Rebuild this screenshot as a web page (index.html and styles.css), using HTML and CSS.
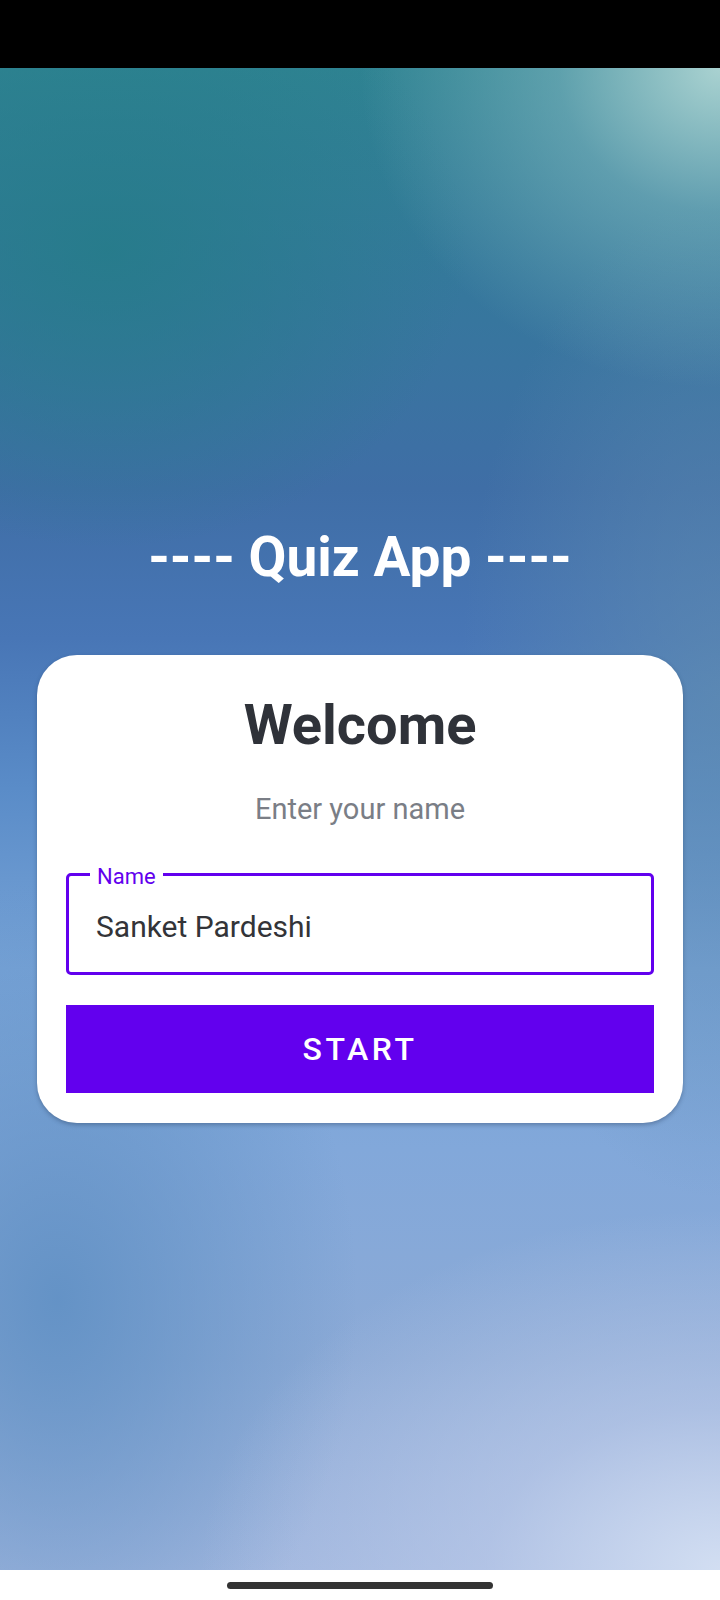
FILE: index.html
```html
<!DOCTYPE html>
<html lang="en">
<head>
<meta charset="utf-8">
<title>Quiz App</title>
<link rel="stylesheet" href="styles.css">
</head>
<body>
<div class="phone">
  <div class="status-bar"></div>
  <main class="screen">
    <h1 class="app-title">---- Quiz App ----</h1>
    <section class="card">
      <h2 class="welcome">Welcome</h2>
      <p class="subtitle">Enter your name</p>
      <div class="field">
        <span class="field-label">Name</span>
        <div class="field-value">Sanket Pardeshi</div>
      </div>
      <button class="start-btn" type="button">START</button>
    </section>
  </main>
  <div class="nav-bar"><span class="nav-handle"></span></div>
</div>
</body>
</html>
```

FILE: styles.css
```css
* { box-sizing: border-box; }

html, body {
  margin: 0;
  padding: 0;
  background: #000;
}

body {
  font-family: Roboto, "Noto Sans", "Liberation Sans", sans-serif;
}

.phone {
  width: 720px;
  height: 1600px;
  display: flex;
  flex-direction: column;
  overflow: hidden;
}

.status-bar {
  height: 68px;
  flex: 0 0 68px;
  background: #000;
}

.screen {
  flex: 1 1 auto;
  display: flex;
  flex-direction: column;
  align-items: center;
  padding-top: 458px;
  background:
    radial-gradient(ellipse 360px 320px at 100% 0%, rgba(176, 214, 212, 0.95) 0%, rgba(140, 190, 198, 0.5) 45%, rgba(120, 170, 190, 0) 100%),
    radial-gradient(ellipse 520px 360px at 100% 100%, rgba(210, 222, 242, 1) 0%, rgba(190, 204, 234, 0.6) 45%, rgba(170, 186, 222, 0) 100%),
    radial-gradient(ellipse 300px 420px at 8% 82%, rgba(96, 144, 196, 0.9) 0%, rgba(96, 144, 196, 0) 100%),
    radial-gradient(ellipse 260px 500px at 100% 42%, rgba(96, 140, 176, 0.7) 0%, rgba(96, 140, 176, 0) 100%),
    radial-gradient(ellipse 360px 300px at 15% 12%, rgba(36, 124, 136, 0.8) 0%, rgba(36, 124, 136, 0) 100%),
    linear-gradient(to bottom, #2f8392 0%, #35789c 14%, #3f6ea6 28%, #4876b6 38%, #5a8cc8 48%, #76a2d6 60%, #82a8da 72%, #8caad6 86%, #a0b6de 100%);
}

.app-title {
  margin: 0;
  font-size: 55px;
  line-height: 62px;
  font-weight: 700;
  color: #ffffff;
  text-align: center;
}

.card {
  margin-top: 67px;
  width: 646px;
  background: #ffffff;
  border-radius: 40px;
  padding: 37px 29px 30px;
  box-shadow: 0 2px 4px rgba(30, 50, 80, 0.35);
  display: flex;
  flex-direction: column;
}

.welcome {
  margin: 0;
  font-size: 56px;
  line-height: 66px;
  font-weight: 700;
  color: #2f3239;
  text-align: center;
}

.subtitle {
  margin: 33px 0 0;
  font-size: 29px;
  line-height: 36px;
  font-weight: 400;
  color: #7a7e86;
  text-align: center;
}

.field {
  position: relative;
  margin-top: 46px;
  height: 102px;
  border: 3px solid #6200ee;
  border-radius: 5px;
  padding: 4px 0 0 27px;
}

.field-label {
  position: absolute;
  left: 21px;
  top: -10px;
  padding: 0 7px;
  background: #ffffff;
  font-size: 22px;
  line-height: 22px;
  color: #6200ee;
}

.field-value {
  font-size: 30px;
  line-height: 93px;
  color: #333438;
}

.start-btn {
  margin-top: 30px;
  height: 88px;
  border: 0;
  border-radius: 0;
  background: #6200ee;
  color: #ffffff;
  font-family: Roboto, "Noto Sans", "Liberation Sans", sans-serif;
  font-size: 32px;
  font-weight: 500;
  letter-spacing: 3.6px;
  display: flex;
  align-items: center;
  justify-content: center;
  padding: 0;
}

.nav-bar {
  flex: 0 0 30px;
  height: 30px;
  background: #ffffff;
  display: flex;
  align-items: center;
  justify-content: center;
}

.nav-handle {
  width: 266px;
  height: 7px;
  border-radius: 4px;
  background: #333333;
}
```
